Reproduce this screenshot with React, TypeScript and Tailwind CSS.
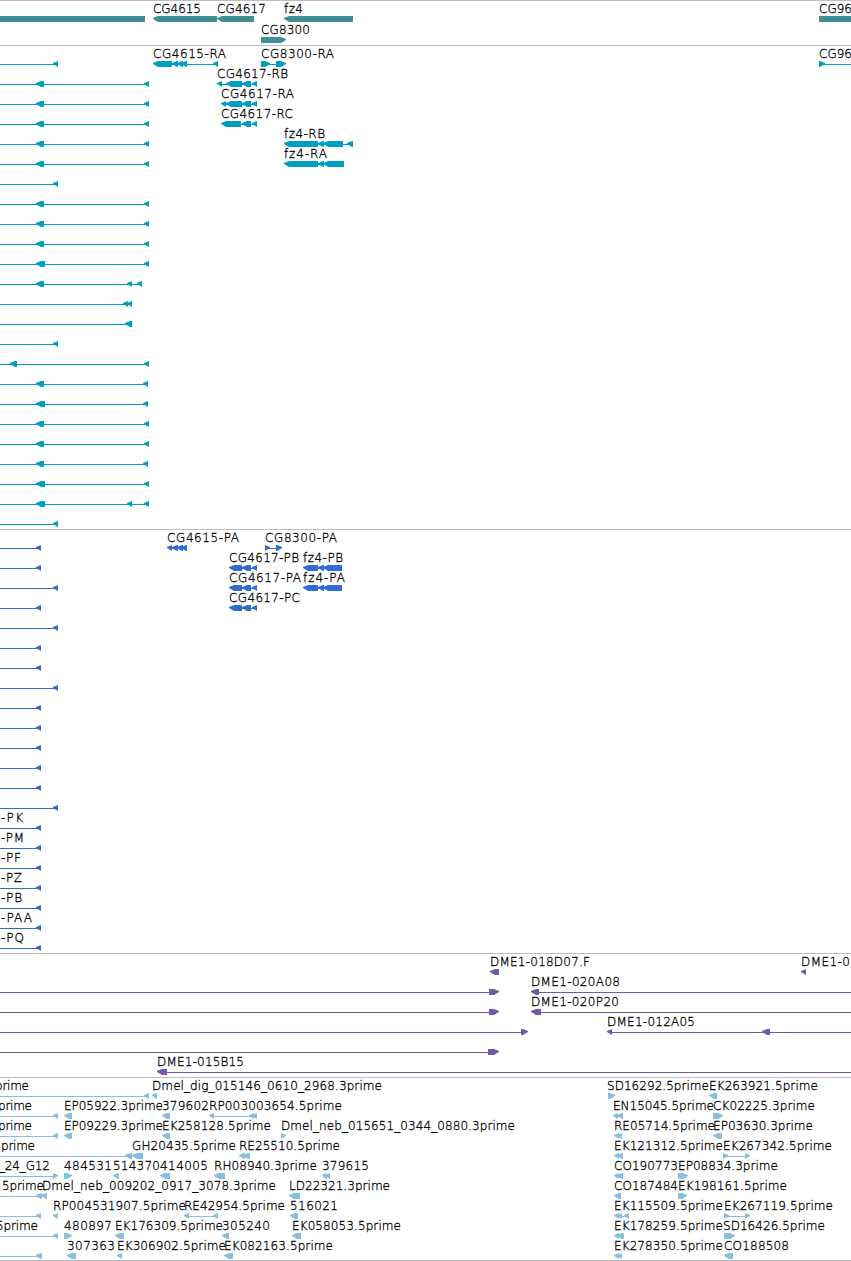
type Block = [number, number];

interface Feature {
  row: number;
  blocks: Block[];
  label?: string;
  // label start and end
  span?: [number, number];
  dir?: 'left' | 'right';
  // where the intron line starts / stops when it runs past the view
  from?: number;
  to?: number;
}

interface TrackData {
  name: string;
  height: number;
  pitch: number;
  color: string;
  features: Feature[];
}

const OFF_LEFT = -10;
const OFF_RIGHT = 860;

const genes: Feature[] = [
  { row: 0, blocks: [[OFF_LEFT, 145]] },
  { row: 0, blocks: [[153, 217]], label: 'CG4615', span: [153, 201] },
  { row: 0, blocks: [[217, 254]], label: 'CG4617', span: [217, 266] },
  { row: 0, blocks: [[284, 353]], label: 'fz4', span: [284, 303] },
  { row: 0, blocks: [[819, OFF_RIGHT]], label: 'CG96', span: [819, 852], dir: 'right' },
  { row: 1, blocks: [[261, 286]], label: 'CG8300', span: [261, 310], dir: 'right' },
];

// transcripts that start left of the view, one per row
const leftTranscripts: Block[][] = [
  [[53, 58]],
  [[36, 44], [144, 149]],
  [[36, 44], [144, 149]],
  [[36, 44], [144, 149]],
  [[36, 44], [144, 149]],
  [[36, 44], [144, 149]],
  [[53, 58]],
  [[36, 44], [144, 149]],
  [[36, 44], [144, 149]],
  [[36, 44], [144, 149]],
  [[36, 45], [144, 149]],
  [[36, 44], [127, 132], [137, 142]],
  [[123, 128], [127, 132]],
  [[125, 132]],
  [[53, 58]],
  [[10, 17], [144, 149]],
  [[36, 44], [143, 148]],
  [[36, 45], [143, 148]],
  [[36, 44], [144, 149]],
  [[36, 44], [144, 149]],
  [[36, 44], [143, 148]],
  [[36, 45], [144, 149]],
  [[36, 45], [127, 132], [144, 149]],
  [[53, 58]],
];

const transcripts: Feature[] = [
  ...leftTranscripts.map((blocks, row) => ({ row, blocks, from: OFF_LEFT })),
  { row: 0, blocks: [[153, 172], [172, 178], [177, 183], [181, 187], [213, 218]], label: 'CG4615-RA', span: [153, 226] },
  { row: 0, blocks: [[261, 270], [276, 286]], label: 'CG8300-RA', span: [261, 334], dir: 'right' },
  { row: 0, blocks: [[819, 825]], label: 'CG96', span: [819, 852], dir: 'right', to: OFF_RIGHT },
  { row: 1, blocks: [[217, 222], [226, 242], [242, 251], [252, 257]], label: 'CG4617-RB', span: [217, 288] },
  { row: 2, blocks: [[221, 226], [226, 242], [242, 251], [252, 257]], label: 'CG4617-RA', span: [221, 294] },
  { row: 3, blocks: [[221, 241], [242, 251], [252, 257]], label: 'CG4617-RC', span: [221, 293] },
  { row: 4, blocks: [[284, 318], [318, 324], [323, 343], [347, 353]], label: 'fz4-RB', span: [284, 325] },
  { row: 5, blocks: [[284, 318], [318, 324], [323, 344]], label: 'fz4-RA', span: [284, 327] },
];

const leftCdsEnds = [41, 41, 58, 41, 58, 41, 41, 58, 41, 41, 41, 41, 41, 58, 41, 41, 41, 41, 41, 41, 41];

const leftCdsLabels: Record<number, [string, number]> = {
  14: ['-PK', 23],
  15: ['-PM', 24],
  16: ['-PF', 21],
  17: ['-PZ', 22],
  18: ['-PB', 22],
  19: ['-PAA', 32],
  20: ['-PQ', 24],
};

const cds: Feature[] = [
  ...leftCdsEnds.map((end, row): Feature => {
    const label = leftCdsLabels[row];
    return {
      row,
      blocks: [[end - 5, end]],
      from: OFF_LEFT,
      label: label?.[0],
      span: label ? [1, label[1]] : undefined,
    };
  }),
  { row: 0, blocks: [[167, 172], [172, 178], [177, 183], [181, 187]], label: 'CG4615-PA', span: [167, 239] },
  { row: 0, blocks: [[265, 270], [276, 282]], label: 'CG8300-PA', span: [265, 337], dir: 'right' },
  { row: 1, blocks: [[229, 242], [242, 251], [252, 257]], label: 'CG4617-PB', span: [229, 299] },
  { row: 1, blocks: [[303, 318], [318, 324], [323, 342]], label: 'fz4-PB', span: [303, 343] },
  { row: 2, blocks: [[229, 242], [242, 251], [252, 257]], label: 'CG4617-PA', span: [229, 301] },
  { row: 2, blocks: [[303, 318], [318, 324], [323, 342]], label: 'fz4-PA', span: [303, 345] },
  { row: 3, blocks: [[229, 242], [242, 251], [252, 257]], label: 'CG4617-PC', span: [229, 300] },
];

const bacs: Feature[] = [
  { row: 0, blocks: [[490, 499]], label: 'DME1-018D07.F', span: [490, 590] },
  { row: 0, blocks: [[801, 806]], label: 'DME1-0', span: [801, 850] },
  { row: 1, blocks: [[489, 499]], dir: 'right', from: OFF_LEFT },
  { row: 1, blocks: [[531, 539]], to: OFF_RIGHT, label: 'DME1-020A08', span: [531, 620] },
  { row: 2, blocks: [[489, 499]], dir: 'right', from: OFF_LEFT },
  { row: 2, blocks: [[531, 541]], to: OFF_RIGHT, label: 'DME1-020P20', span: [531, 619] },
  { row: 3, blocks: [[521, 528]], dir: 'right', from: OFF_LEFT },
  { row: 3, blocks: [[607, 612], [762, 770]], to: OFF_RIGHT, label: 'DME1-012A05', span: [607, 695] },
  { row: 4, blocks: [[488, 499]], dir: 'right', from: OFF_LEFT },
  { row: 5, blocks: [[157, 167]], to: OFF_RIGHT, label: 'DME1-015B15', span: [157, 244] },
];

const ests: Feature[] = [
  { row: 0, blocks: [[144, 149]], from: OFF_LEFT, label: 'prime', span: [-5, 29] },
  { row: 0, blocks: [[152, 157]], label: 'Dmel_dig_015146_0610_2968.3prime', span: [152, 382] },
  { row: 0, blocks: [[608, 615]], dir: 'right', label: 'SD16292.5prime', span: [607, 709] },
  { row: 0, blocks: [[709, 717]], label: 'EK263921.5prime', span: [709, 818] },

  { row: 1, blocks: [[53, 58]], from: OFF_LEFT, label: 'prime', span: [-2, 32] },
  { row: 1, blocks: [[64, 72]], label: 'EP05922.3prime', span: [64, 163] },
  { row: 1, blocks: [[162, 170]], label: '379602', span: [162, 209] },
  { row: 1, blocks: [[209, 214], [249, 254], [252, 257]], label: 'RP003003654.5prime', span: [209, 342] },
  { row: 1, blocks: [[613, 618], [617, 623]], label: 'EN15045.5prime', span: [613, 714] },
  { row: 1, blocks: [[713, 723]], dir: 'right', label: 'CK02225.3prime', span: [713, 815] },

  { row: 2, blocks: [[53, 58]], from: OFF_LEFT, label: 'prime', span: [-2, 32] },
  { row: 2, blocks: [[64, 72]], label: 'EP09229.3prime', span: [64, 163] },
  { row: 2, blocks: [[162, 170]], label: 'EK258128.5prime', span: [162, 271] },
  { row: 2, blocks: [[281, 286]], dir: 'right', label: 'Dmel_neb_015651_0344_0880.3prime', span: [281, 515] },
  { row: 2, blocks: [[614, 619], [617, 622]], label: 'RE05714.5prime', span: [614, 715] },
  { row: 2, blocks: [[713, 722]], label: 'EP03630.3prime', span: [713, 813] },

  { row: 3, blocks: [[125, 132]], from: OFF_LEFT, label: 'prime', span: [1, 35] },
  { row: 3, blocks: [[132, 143]], label: 'GH20435.5prime', span: [132, 236] },
  { row: 3, blocks: [[239, 245], [243, 250]], label: 'RE25510.5prime', span: [239, 340] },
  { row: 3, blocks: [[614, 619], [617, 623]], label: 'EK121312.5prime', span: [614, 723] },
  { row: 3, blocks: [[723, 728], [745, 750]], dir: 'right', label: 'EK267342.5prime', span: [723, 832] },

  { row: 4, blocks: [[53, 58]], dir: 'right', from: OFF_LEFT, label: '_24_G12', span: [-1, 50] },
  { row: 4, blocks: [[64, 72]], dir: 'right', label: '484531', span: [64, 112] },
  { row: 4, blocks: [[113, 119]], label: '514370', span: [113, 160] },
  { row: 4, blocks: [[160, 170]], label: '414005', span: [160, 208] },
  { row: 4, blocks: [[214, 225]], label: 'RH08940.3prime', span: [214, 317] },
  { row: 4, blocks: [[322, 327], [325, 330]], label: '379615', span: [322, 369] },
  { row: 4, blocks: [[614, 619], [617, 623]], label: 'CO190773', span: [614, 678] },
  { row: 4, blocks: [[678, 688]], dir: 'right', label: 'EP08834.3prime', span: [678, 778] },

  { row: 5, blocks: [[36, 42]], from: OFF_LEFT, label: '5prime', span: [2, 44] },
  { row: 5, blocks: [[41, 47]], label: 'Dmel_neb_009202_0917_3078.3prime', span: [42, 276] },
  { row: 5, blocks: [[289, 300]], label: 'LD22321.3prime', span: [289, 390] },
  { row: 5, blocks: [[614, 621]], label: 'CO187484', span: [614, 678] },
  { row: 5, blocks: [[678, 687]], dir: 'right', label: 'EK198161.5prime', span: [678, 787] },

  { row: 6, blocks: [[36, 41]], from: OFF_LEFT },
  { row: 6, blocks: [[53, 58]], label: 'RP004531907.5prime', span: [53, 186] },
  { row: 6, blocks: [[184, 189], [213, 218]], label: 'RE42954.5prime', span: [184, 285] },
  { row: 6, blocks: [[290, 298]], label: '516021', span: [290, 338] },
  { row: 6, blocks: [[614, 619], [617, 622], [624, 629]], label: 'EK115509.5prime', span: [614, 723] },
  { row: 6, blocks: [[724, 729], [745, 750]], dir: 'right', label: 'EK267119.5prime', span: [724, 833] },

  { row: 7, blocks: [[53, 58]], from: OFF_LEFT, label: '5prime', span: [-4, 38] },
  { row: 7, blocks: [[64, 72]], dir: 'right', label: '480897', span: [64, 112] },
  { row: 7, blocks: [[115, 124]], label: 'EK176309.5prime', span: [115, 223] },
  { row: 7, blocks: [[222, 229]], label: '305240', span: [222, 270] },
  { row: 7, blocks: [[292, 301]], label: 'EK058053.5prime', span: [292, 401] },
  { row: 7, blocks: [[614, 619], [617, 624]], label: 'EK178259.5prime', span: [614, 723] },
  { row: 7, blocks: [[724, 735]], dir: 'right', label: 'SD16426.5prime', span: [723, 825] },

  { row: 8, blocks: [[36, 42]], from: OFF_LEFT },
  { row: 8, blocks: [[67, 76]], label: '307363', span: [67, 115] },
  { row: 8, blocks: [[117, 122]], label: 'EK306902.5prime', span: [117, 226] },
  { row: 8, blocks: [[224, 233]], label: 'EK082163.5prime', span: [224, 333] },
  { row: 8, blocks: [[614, 619], [617, 622]], label: 'EK278350.5prime', span: [614, 723] },
  { row: 8, blocks: [[724, 733]], label: 'CO188508', span: [724, 789] },
];

const tracks: TrackData[] = [
  { name: 'genes', height: 44, pitch: 21, color: '#408f95', features: genes },
  { name: 'transcripts', height: 483, pitch: 20, color: '#009fc1', features: transcripts },
  { name: 'cds', height: 423, pitch: 20, color: '#306dce', features: cds },
  { name: 'bacs', height: 123, pitch: 20, color: '#7559a9', features: bacs },
  { name: 'ests', height: 182, pitch: 20, color: '#88bede', features: ests },
];

// block with a blunt arrow head on the side it is read towards
function arrowPoints([x1, x2]: Block, y: number, dir: 'left' | 'right') {
  const right = dir === 'right';
  const tip = right ? x2 : x1;
  const back = right ? x1 : x2;
  const step = right ? -1 : 1;
  const neck = tip + step * Math.min(5, x2 - x1);
  return [
    [back, y - 3],
    [neck, y - 3],
    [tip, y - 1],
    [tip, y],
    [neck, y + 3],
    [back, y + 3],
  ]
    .map((p) => p.join(','))
    .join(' ');
}

function FeatureGlyph({ feature, y }: { feature: Feature; y: number }) {
  const { blocks, label, span, dir = 'left' } = feature;
  const start = feature.from ?? blocks[0][0] + 2;
  const end = feature.to ?? blocks[blocks.length - 1][1] - 2;

  return (
    <g>
      <rect x={start} y={y} width={end - start} height={1} />
      {blocks.map((block, i) => (
        <polygon key={i} points={arrowPoints(block, y, dir)} />
      ))}
      {label && span && (
        <text
          x={span[0]}
          y={y - 6}
          textLength={span[1] - span[0]}
          className="fill-black stroke-black stroke-[0.3px] text-[12px] font-extralight"
        >
          {label}
        </text>
      )}
    </g>
  );
}

function Track({ track }: { track: TrackData }) {
  return (
    <section className="border-t border-[#bebebe]">
      <svg
        width={851}
        height={track.height}
        fill={track.color}
        className="block overflow-hidden"
      >
        {track.features.map((feature, i) => (
          <FeatureGlyph key={i} feature={feature} y={18 + feature.row * track.pitch} />
        ))}
      </svg>
    </section>
  );
}

export default function App() {
  return (
    <main className="flex w-[851px] flex-col overflow-hidden border-b border-[#bebebe] bg-white font-['DejaVu_Sans',sans-serif]">
      {tracks.map((track) => (
        <Track key={track.name} track={track} />
      ))}
    </main>
  );
}
